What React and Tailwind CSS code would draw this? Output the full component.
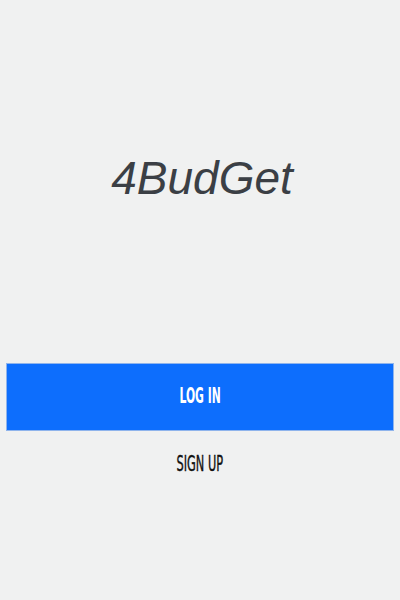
export default function App() {
  return (
    <div className="w-[400px] h-[600px] bg-[#f0f1f1] flex flex-col">
      <div className="h-[363px] flex justify-center pt-[151px] pl-[4px]">
        <h1 className="text-[46px] leading-[54px] italic text-[#3b3f45] [font-family:'Liberation_Sans',Arial,sans-serif]">
          4BudGet
        </h1>
      </div>
      <div className="px-[6px]">
        <button className="w-full h-[68px] bg-[#0d6efd] border border-[#8fb4ec] flex items-center justify-center">
          <span className="inline-block text-white text-[21px] font-bold scale-x-[0.57] [font-family:'DejaVu_Sans_Condensed','DejaVu_Sans',sans-serif]">
            LOG IN
          </span>
        </button>
      </div>
      <div className="flex justify-center mt-[18px]">
        <span className="inline-block text-[#111] text-[21px] [-webkit-text-stroke:0.4px_#111] scale-x-[0.6] [font-family:'DejaVu_Sans_Condensed','DejaVu_Sans',sans-serif]">
          SIGN UP
        </span>
      </div>
    </div>
  );
}
